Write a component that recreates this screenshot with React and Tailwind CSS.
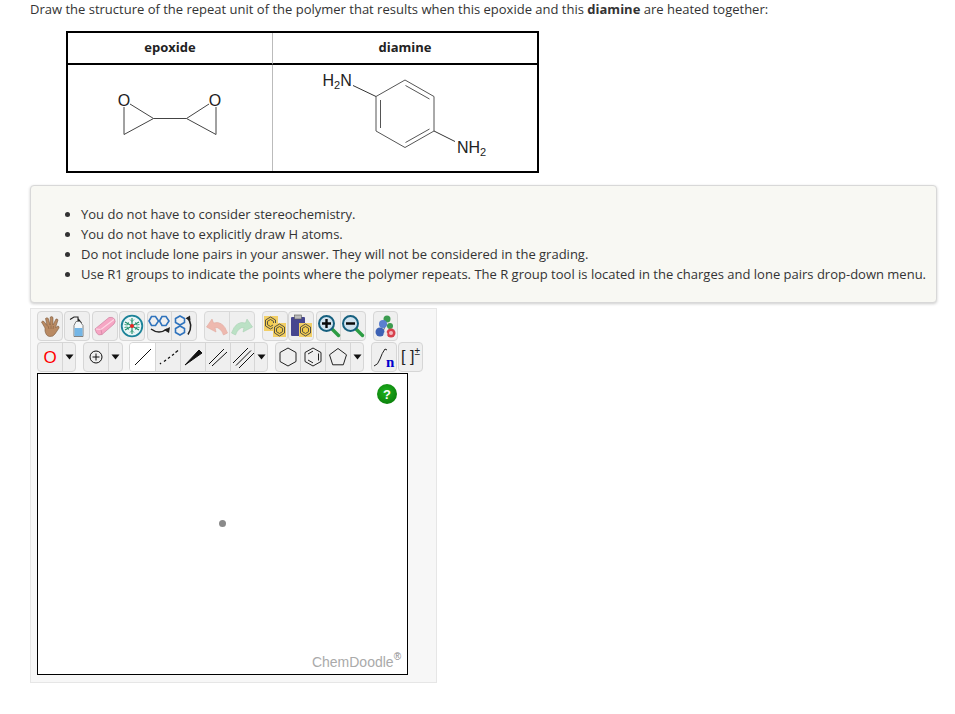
import React from "react";

const Btn = ({ w = 24, active, className = "", children }) => (
  <div
    style={{ width: w }}
    className={`h-[28px] flex items-center justify-center border-r border-[#d6d6d6] last:border-r-0 ${active ? "bg-white" : ""} ${className}`}
  >
    {children}
  </div>
);
const Group = ({ children, className = "" }) => (
  <div className={`flex shrink-0 h-[30px] rounded-[4px] border border-[#d6d6d6] bg-[#efefef] overflow-hidden ${className}`}>{children}</div>
);
const Caret = () => <svg width="9" height="6" viewBox="0 0 9 6"><path d="M0.5 0.5h8L4.5 5.5z" fill="#111" /></svg>;
const S = ({ children, w = 24, h = 24 }) => <svg width={w} height={h} viewBox={`0 0 ${w} ${h}`} className="shrink-0">{children}</svg>;

const Hand = () => (
  <S>
    <path d="M7 14 L3.500 8 Q4.500 6.500 6 7.500 L9 11.500 L7.500 4.500 Q9 3 10.300 4.500 L12 11 L12.300 3 Q14 2 15 3.500 L15 11 L18 5 Q19.500 4.500 20 6 L17.500 13.500 L20 12 Q21.500 12.500 21 14 L17 20 Q15 23 11.500 22.500 Q8 22 7 17 Z" fill="#b98a63" stroke="#7d5a3e" strokeWidth="0.6" />
    <path d="M10 12l1 3M13 11.500v3.500M15.500 12l-.5 3" stroke="#7a5538" strokeWidth="0.5" fill="none" />
  </S>
);
const Bottle = () => (
  <S>
    <path d="M5 5.500 L9 3 L13 3 L13 7 M13 4.500 L16.500 9" fill="none" stroke="#222" strokeWidth="1.100" />
    <path d="M11 7.500 h4 l3 4 v11 h-9 v-11z" fill="#f4f7f9" stroke="#666" strokeWidth="0.8" />
    <rect x="9.500" y="14" width="8" height="8" fill="#74b6e6" />
  </S>
);
const Eraser = () => (
  <S>
    <path d="M2 15 L16 3.500 Q19.500 2.500 21.500 5 Q23 7.500 21 10 L9 20.500 Q5.500 22 3.500 19 Z" fill="#f6a6c4" stroke="#cf83a0" strokeWidth="0.7" />
    <path d="M3 15 L8 15.500 L21 5.500" fill="none" stroke="#fdd9e5" strokeWidth="1.100" />
    <path d="M8 15.500 L9 20.500" stroke="#cf83a0" strokeWidth="0.7" />
  </S>
);
const Ring = () => (
  <S>
    <circle cx="12" cy="12" r="10.300" fill="#eaf6f7" stroke="#1c8399" strokeWidth="1.800" />
    <g stroke="#1b8a66" strokeWidth="1.100">
      <path d="M12 4v16M5 8l14 8M19 8L5 16" />
      <path d="M10 5.500l2 2 2-2M10 18.500l2-2 2 2M4.500 10.500l3 .5 1-2.800M19.500 13.500l-3-.5-1 2.800M4.500 13.500l3-.5 1 2.800M19.500 10.500l-3 .5-1-2.800" fill="none" strokeWidth="0.8" />
    </g>
    <circle cx="12" cy="12" r="2" fill="#e22" />
  </S>
);
const Flip = ({ flip }) => (
  <S>
    <g fill="none" stroke="#2f73bd" strokeWidth="1.600">
      {flip ? (
        <>
          <path d="M8 2l4.500 2.500v4L8 11 3.500 8.500v-4z" />
          <path d="M8 12l4.500 2.500v4L8 21l-4.500-2.500v-4z" />
          <path d="M15 3.500 q7 7 1 17" stroke="#222" strokeWidth="1.500" />
          <path d="M13.500 4.500l4.500-3 .5 5z" fill="#222" stroke="none" />
        </>
      ) : (
        <>
          <path d="M1 7l2.500-4.500h4L10.500 7 7.500 11.500h-4z" />
          <path d="M11.500 7l2.500-4.500h4L21 7l-3 4.500h-4z" />
          <path d="M3 15 q8 6 16 0" stroke="#222" strokeWidth="1.500" />
          <path d="M22 13l-1 6-5-3z" fill="#222" stroke="none" />
        </>
      )}
    </g>
  </S>
);
const Undo = ({ redo }) => (
  <S>
    <g transform={redo ? "translate(24 0) scale(-1 1)" : undefined}>
      <path d="M1.500 13 L7 5 L8.500 9 Q18 6 22.500 19 L18.500 21 Q15.500 13 10 13.500 L11 18 Z" fill={redo ? "#b5dfc0" : "#eeb3a8"} stroke={redo ? "#a3cfae" : "#dfa195"} strokeWidth="0.6" />
    </g>
  </S>
);
const Hex3 = ({ x, y, c = "#444" }) => (
  <g transform={`translate(${x} ${y})`}>
    <path d="M6 0l5 3v6l-5 3-5-3V3z" fill="#f2cc4d" stroke={c} strokeWidth="0.9" />
    <path d="M6 2.500l3 1.800v3.400l-3 1.800-3-1.800V4.300z" fill="none" stroke={c} strokeWidth="0.9" />
  </g>
);
const Copy = () => (
  <S>
    <rect x="1" y="2" width="14" height="15" fill="#f2cf66" />
    <Hex3 x={1.500} y={3} />
    <rect x="10" y="9" width="13" height="14" fill="#f2cf66" />
    <Hex3 x={10.500} y={10} />
  </S>
);
const Paste = () => (
  <S>
    <rect x="2" y="3" width="14" height="19" rx="1" fill="#46468f" />
    <rect x="5.500" y="1" width="7" height="4" fill="#bbb" stroke="#555" strokeWidth="0.6" />
    <rect x="10" y="9" width="13" height="14" fill="#f2cf66" />
    <Hex3 x={10.500} y={10} />
  </S>
);
const Mag = ({ plus }) => (
  <S>
    <path d="M14 14 L21.500 21.500" stroke="#2c9c43" strokeWidth="3.400" strokeLinecap="round" />
    <circle cx="9.500" cy="9.500" r="7.500" fill="#cfe2ee" stroke="#16607f" strokeWidth="2" />
    <path d="M5 9.500h9" stroke="#0a0a0a" strokeWidth="2.400" />
    {plus && <path d="M9.500 5v9" stroke="#0a0a0a" strokeWidth="2.400" />}
  </S>
);
const Atoms3D = () => (
  <S>
    <path d="M8 20L12 10L18 18" stroke="#666" fill="none" />
    <circle cx="13" cy="5" r="3.500" fill="#3b9b4f" />
    <circle cx="9" cy="10" r="4" fill="#5a7fd0" />
    <circle cx="6" cy="18" r="4.500" fill="#3d62b5" />
    <circle cx="16" cy="12" r="3" fill="#3b9b4f" />
    <circle cx="17" cy="19" r="4.500" fill="#d7404c" />
    <circle cx="17" cy="19" r="2" fill="#f1b9bd" />
    <circle cx="11.500" cy="20" r="2" fill="#e9e9e9" />
  </S>
);
const Line = ({ children }) => (
  <svg width="22" height="22" viewBox="0 0 22 22" fill="none" stroke="#111" strokeWidth="1" className="shrink-0">{children}</svg>
);

const Hexagon = ({ benz }) => (
  <svg width="20" height="22" viewBox="0 0 20 22" fill="none" stroke="#222" strokeWidth="1">
    <path d="M10 2l8 4.500v9L10 20l-8-4.500v-9z" />
    {benz && <path d="M5 8l5-2.900M15.500 7.500v7M5 14l5 2.900" />}
  </svg>
);
const Pentagon = () => (
  <svg width="20" height="20" viewBox="0 0 20 20" fill="none" stroke="#222" strokeWidth="1">
    <path d="M10 1.500l8.500 6.300-3.200 10H4.700l-3.200-10z" />
  </svg>
);

const Epoxide = () => (
  <svg className="block" width="204" height="106" viewBox="68 65 204 106" fill="none" stroke="#444" strokeWidth="1">
    <path d="M124 107V134.500L153.500 118.500H186.500L216 134.500V107M130 104L153.500 118.500M186.500 118.500L209 104" />
    <text x="124" y="106" textAnchor="middle" fontSize="16" fill="#222" stroke="none" fontFamily="'Liberation Sans', sans-serif">O</text>
    <text x="215" y="106" textAnchor="middle" fontSize="16" fill="#222" stroke="none" fontFamily="'Liberation Sans', sans-serif">O</text>
  </svg>
);
const Diamine = () => (
  <svg className="block" width="264" height="106" viewBox="273 65 264 106" fill="none" stroke="#555" strokeWidth="1">
    <path d="M405 80L434 96.500V131L405 147.500L376 131V96.500Z" />
    <path d="M380.500 100V128M405.500 85.500L429.500 99M405.500 142.500L429.500 129" />
    <path d="M353 85.500L376 96.500M434 131L455 141.500" stroke="#333" />
    <text x="322.500" y="85.500" fontSize="16" fill="#222" stroke="none" fontFamily="'Liberation Sans', sans-serif">H<tspan fontSize="11" dy="3">2</tspan><tspan dy="-3">N</tspan></text>
    <text x="457" y="152.500" fontSize="16" fill="#222" stroke="none" fontFamily="'Liberation Sans', sans-serif">NH<tspan fontSize="11" dy="3">2</tspan></text>
  </svg>
);

export default function App() {
  return (
    <div className="w-[955px] h-[714px] bg-white overflow-hidden pl-[30px] text-[13px] text-[#333]" style={{ fontFamily: "'Open Sans', sans-serif" }}>
      <p className="h-[18px] leading-[18px]">Draw the structure of the repeat unit of the polymer that results when this epoxide and this <b>diamine</b> are heated together:</p>

      <div className="mt-[13px] ml-[36px] w-[473px] h-[142px] border-2 border-black grid grid-cols-[205px_1fr] grid-rows-[32px_1fr]">
        <div className="flex items-center justify-center font-bold text-[#222] border-b-2 border-black border-r border-r-[#bbb]">epoxide</div>
        <div className="flex items-center justify-center font-bold text-[#222] border-b-2 border-black">diamine</div>
        <div className="border-r border-[#bbb]"><Epoxide /></div>
        <div><Diamine /></div>
      </div>

      <div className="mt-[12px] w-[907px] h-[118px] rounded-[4px] border border-[#d8d8d8] bg-[#f8f8f3] shadow-[0_1px_3px_rgba(0,0,0,0.2)] pt-[18px] pl-[50px]">
        <ul className="list-disc leading-[20px] whitespace-nowrap">
          <li>You do not have to consider stereochemistry.</li>
          <li>You do not have to explicitly draw H atoms.</li>
          <li>Do not include lone pairs in your answer. They will not be considered in the grading.</li>
          <li>Use R1 groups to indicate the points where the polymer repeats. The R group tool is located in the charges and lone pairs drop-down menu.</li>
        </ul>
      </div>

      <div className="mt-[5px] w-[407px] h-[375px] border border-[#e6e6e6] bg-[#f7f7f7] pl-[6px] pt-[2px]">
        <div className="flex h-[31px]">
          <Group><Btn><Hand /></Btn></Group>
          <Group className="ml-px"><Btn><Bottle /></Btn></Group>
          <Group className="ml-[2px]"><Btn><Eraser /></Btn></Group>
          <Group className="ml-px"><Btn><Ring /></Btn></Group>
          <Group className="ml-[2px]"><Btn><Flip /></Btn><Btn><Flip flip /></Btn></Group>
          <Group className="ml-[7px] opacity-90"><Btn w={25}><Undo /></Btn><Btn><Undo redo /></Btn></Group>
          <Group className="ml-[7px]"><Btn><Copy /></Btn></Group>
          <Group><Btn><Paste /></Btn></Group>
          <Group className="ml-[2px]"><Btn><Mag plus /></Btn><Btn><Mag /></Btn></Group>
          <Group className="ml-[7px]"><Btn w={23}><Atoms3D /></Btn></Group>
        </div>
        <div className="flex h-[31px]">
          <Group>
            <Btn w={25}><span className="text-[17px] leading-none text-[#f00]" style={{ fontFamily: "'Liberation Sans', sans-serif" }}>O</span></Btn>
            <Btn w={12}><Caret /></Btn>
          </Group>
          <Group className="ml-[7px]">
            <Btn w={25}><svg width="14" height="14" viewBox="0 0 14 14" fill="none" stroke="#111"><circle cx="7" cy="7" r="6" /><path d="M7 3.500v7M3.500 7h7" /></svg></Btn>
            <Btn w={13}><Caret /></Btn>
          </Group>
          <Group className="ml-[6px]">
            <Btn w={26} active><Line><path d="M3 19L19 3" /></Line></Btn>
            <Btn w={25}><Line><path d="M3 18l1-1M7 15.500l2-1.500M11 12.500l2-1.500M15 9.500l2-1.500M18.500 6.500l2.500-2" strokeWidth="1.300" /></Line></Btn>
            <Btn w={25}><Line><path d="M3 19L17 4l3 3z" fill="#111" /></Line></Btn>
            <Btn w={25}><Line><path d="M2 18L17 3M5 20L20 6" /></Line></Btn>
            <Btn><Line><path d="M1 17L16 2M4 19.500L19 4.500M7 22L22 7" /></Line></Btn>
            <Btn w={12}><Caret /></Btn>
          </Group>
          <Group className="ml-[7px]">
            <Btn w={25}><Hexagon /></Btn>
            <Btn w={25}><Hexagon benz /></Btn>
            <Btn w={25}><Pentagon /></Btn>
            <Btn w={12}><Caret /></Btn>
          </Group>
          <Group className="ml-[7px]">
            <Btn>
              <svg width="24" height="24" viewBox="0 0 24 24" fill="none" className="shrink-0">
                <path d="M2 21Q6 20 8 14T13 4L15 5" stroke="#222" />
                <text x="14" y="22" fontSize="15" fontWeight="700" fill="#00c" fontFamily="'Liberation Serif', serif">n</text>
              </svg>
            </Btn>
          </Group>
          <Group className="ml-px">
            <Btn w={23}>
              <div className="flex items-start whitespace-nowrap text-[#222]" style={{ fontFamily: "'Liberation Sans', sans-serif" }}>
                <span className="text-[16px] leading-[16px]">[ ]</span>
                <span className="text-[10px] leading-[10px] mt-[-2px]">±</span>
              </div>
            </Btn>
          </Group>
        </div>
        <div className="relative w-[371px] h-[302px] bg-white border border-black" style={{ fontFamily: "'Liberation Sans', sans-serif" }}>
          <div className="absolute left-[339px] top-[10px] w-[20px] h-[20px] rounded-full bg-[radial-gradient(circle_at_45%_40%,#1fb41f,#057005)] flex items-center justify-center text-white text-[13px] font-bold leading-none">?</div>
          <div className="absolute left-[181px] top-[146px] w-[7px] h-[7px] rounded-full bg-[#8a8a8a]"></div>
          <div className="absolute right-[6px] bottom-[4px] text-[14px] leading-[16px] text-[#aaa] flex items-start">ChemDoodle<span className="text-[10px] leading-none text-[#888] mt-[-2px]">®</span></div>
        </div>
      </div>
    </div>
  );
}
